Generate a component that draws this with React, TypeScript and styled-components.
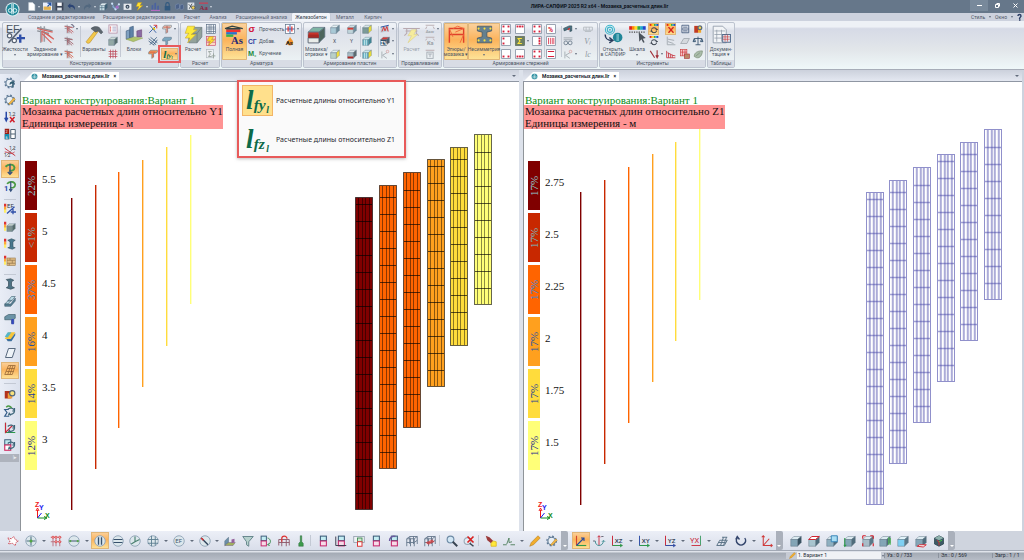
import React from 'react';
import styled, { createGlobalStyle, css } from 'styled-components';

const Global = createGlobalStyle`
  * { box-sizing: border-box; }
  body { margin: 0; background: #cdd3de; font-family: Roboto, "Noto Sans", sans-serif; font-size: 5px; line-height: 5px; color: #4a5363; }
  button, select { font: inherit; color: inherit; border: 0; padding: 0; margin: 0; background: none; }
  h2, p { margin: 0; font-weight: 400; }
  svg { display: block; flex: none; overflow: visible; }
`;

/* ---------- icon drawings, all on a 16 x 16 grid ---------- */

const cube = (front: string, top = '#b9d3dd', side = '#5a7384', extra: React.ReactNode = null) => (
  <>
    <path d="M1 6l4-4h10l-5 4z" fill={top} stroke="#5b7080" strokeWidth=".6" />
    <path d="M10 6l5-4v8l-5 5z" fill={side} stroke="#5b7080" strokeWidth=".6" />
    <path d="M1 6h9v9H1z" fill={front} stroke="#5b7080" strokeWidth=".6" />
    {extra}
  </>
);

const section = (dots: number[][], center: React.ReactNode = null) => (
  <>
    <rect x="1" y="1" width="14" height="14" fill="#fff" stroke="#7d8a9c" strokeWidth="1.2" />
    {dots.map(([x, y], i) => <rect key={i} x={x} y={y} width="3" height="3" fill="#d8203c" />)}
    {center}
  </>
);

const disc = (extra: React.ReactNode) => (
  <>
    <circle cx="8" cy="8" r="7" fill="#dce7ec" stroke="#8fa3b5" strokeWidth="1.2" />
    {extra}
  </>
);

const frame = (color: string, extra: React.ReactNode = null) => (
  <>
    <path d="M1 15V5l4-3h10v10M5 2v10M1 5h10v10M11 5l4-3M1 10h10l4-3M6 15V5M10 2v10" fill="none" stroke={color} strokeWidth="1.2" />
    {extra}
  </>
);

const tee = (color: string, extra: React.ReactNode = null) => (
  <>
    <path d="M1 5l3-3h11v3l-3 2H9v6l-3 2V8H1z" fill={color} stroke="#5c6e80" strokeWidth=".8" />
    {extra}
  </>
);

const rebar = (color: string, extra: React.ReactNode = null) => (
  <>
    <path d="M1 3l12 2M1 7l8 1M5 1v14M8 3v12" fill="none" stroke="#8f8a92" strokeWidth="1.200" />
    <path d="M1 4l13 2M5 5l10 8M5 8l8 7M6 6v8" fill="none" stroke={color} strokeWidth="1.300" />
    {extra}
  </>
);

const axes = (label: string, c1: string, c2: string, ct: string) => (
  <>
    <path d="M2 1v13h13" fill="none" stroke={c1} strokeWidth="1.3" />
    <path d="M2 14h13M12 12l3 2-3 2" fill="none" stroke={c2} strokeWidth="1.3" />
    <text x="5" y="10" fontSize="8" fontWeight="700" fill={ct} fontFamily="Liberation Sans, sans-serif">{label}</text>
  </>
);

const boxes = (extra: React.ReactNode) => (
  <>
    <rect x="4.500" y="1.500" width="8" height="6" fill="#c3edf3" stroke="#3c5c7a" strokeWidth="1.4" />
    <rect x="4.500" y="8" width="8" height="6.500" fill="#f7dbe8" stroke="#c5286e" strokeWidth="1.4" />
    {extra}
  </>
);

const scaleTag = (
  <>
    <rect x="0" y="1" width="3" height="4" fill="#d33" />
    <rect x="0" y="5" width="3" height="4" fill="#fa3" />
    <rect x="0" y="9" width="3" height="4" fill="#fe6" />
  </>
);

const swirl = <path d="M5 6a5 4.500 0 0 1 9 2a5 4.500 0 0 1-7 4M14 4v4h-3M6 14l1-3 2 3" fill="none" stroke="#3c6478" strokeWidth="1.6" />;

const rainbow = (y = 1) => (
  <>
    {['#d22', '#f80', '#fd2', '#3a4', '#2ac', '#24c'].map((c, i) => (
      <rect key={c} x={1 + i * 2.3} y={y} width="2.400" height="3" fill={c} />
    ))}
  </>
);

const word = (t: string, fill: string, size = 13, x = 0) => (
  <text x={x} y="13" fontSize={size} fontWeight="700" fill={fill} fontFamily="Liberation Sans, sans-serif">{t}</text>
);

const gear = (c = '#5c7894') => (
  <>
    <circle cx="7.500" cy="8" r="5" fill="#e8eef4" stroke={c} strokeWidth="1.500" />
    <circle cx="7.500" cy="8" r="6.400" fill="none" stroke={c} strokeWidth="1.600" strokeDasharray="2.500 2.500" />
  </>
);

const bolt = (c = '#ffdf2e', s = '#b8901a') => <path d="M5 1h7L9 6h5L4 15l3-7H2z" fill={c} stroke={s} strokeWidth=".8" />;

const glyphs: Record<string, React.ReactNode> = {
  doc: <path d="M3 1h7l4 4v10H3z" fill="#fff" stroke="#c5ced8" />,
  open: <><rect x="0" y="1" width="16" height="14" fill="#e7eefb" /><path d="M1 8h13v6H1z" fill="#e2b04c" /><path d="M8 2h6v5M14 2L8 8" stroke="#2452a0" strokeWidth="2" fill="none" /></>,
  save: <><path d="M1 1h14v14H1z" fill="#3c4658" /><path d="M4 1h8v6H4z" fill="#fff" /><path d="M4 10h8v5H4z" fill="#dfe5ec" /></>,
  undo: <path d="M1 7l5-5v3c6 0 9 3 8 9-2-4-4-5-8-5v3z" fill="#2b4474" />,
  redo: <path d="M15 7l-5-5v3c-6 0-9 3-8 9 2-4 4-5 8-5v3z" fill="#52687f" />,
  block: cube('#c9dfe8', '#eaf4f7', '#3f6076', <path d="M5 6v9M1 10h9" stroke="#3f6076" />),
  nodes: <><path d="M2 3l5 9 7-8M2 8l6 5 6-3" stroke="#8db7e4" strokeWidth="1.500" fill="none" />{[[2, 3], [14, 4], [8, 13]].map(([x, y]) => <circle key={x} cx={x} cy={y} r="2" fill="#cfe2f5" />)}<circle cx="11" cy="9" r="3" fill="#a56cc0" /></>,
  camera: <><rect x="1" y="3" width="14" height="11" fill="#e6e9ed" /><circle cx="8" cy="8.500" r="3.500" fill="#3a485a" /><circle cx="8" cy="8.500" r="1.500" fill="#b8c5d2" /></>,
  bolt: bolt(),
  chart: <><path d="M1 14V6l3-1v8zM6 14V2l3-1v12zM11 14V7l3-1v8z" fill="#4a62a0" /><path d="M0 15h16" stroke="#b46cc0" strokeWidth="2" /></>,
  lock: <><rect x="3" y="7" width="10" height="8" fill="#31597f" /><path d="M5 7V4a3 3 0 0 1 6 0v3" stroke="#31597f" strokeWidth="2" fill="none" /></>,
  blocks3: <path d="M1 5l5-2 2 2v6l-5 2-2-2zM9 6l4-2 2 2v6l-4 2-2-2z" fill="#4c6288" stroke="#7c90b4" />,
  find: <><rect x="1" y="1" width="12" height="13" fill="#e0e5ea" /><path d="M3 4l7 7M9 3l-5 9" stroke="#36424e" strokeWidth="1.500" /><circle cx="11" cy="10" r="3" fill="#f3d65b" stroke="#333" /></>,
  aa: <><rect x="0" y="1" width="16" height="2" fill="#d33b4f" /><text x="1" y="14" fontSize="12" fontWeight="700" fill="#8f2440" fontFamily="Liberation Serif, serif">Aa</text></>,
  ef: <><text x="0" y="7" fontSize="9" fill="#47535f" fontFamily="Liberation Sans, sans-serif">EF</text><path d="M2 15L13 3" stroke="#566274" strokeWidth="1.400" /><circle cx="3" cy="9" r="1.800" fill="#fff" stroke="#566274" /><circle cx="7" cy="13" r="1.800" fill="#fff" stroke="#566274" /><path d="M11 8h2v2h3v2h-3v3h-2v-3H9v-2h2z" fill="#2f4fa8" /></>,
  rebarBig: <><path d="M1 2l13 3M1 5l10 2" stroke="#8a8f96" strokeWidth="1.100" /><path d="M4 1v14M7 1v13" stroke="#9a9fa6" strokeWidth="1.300" /><path d="M1 3l13 3M5 5l10 7M5 7l8 8M9 7l6 5M5 5v9" stroke="#d8605a" strokeWidth=".9" fill="none" /></>,
  rebar1: rebar('#c0565a', <path d="M11 1h3v2h2v2h-2" stroke="#335" fill="none" />),
  rebar2: rebar('#9d5961'),
  rebar3: rebar('#d05a45'),
  hammer: <><path d="M1 14L9 4l2 1.500L4 15c-1 1-3 0-3-1z" fill="#f3c84a" stroke="#b98a24" strokeWidth=".5" /><path d="M5 3c2-2 5-2 7-1l3 4-1.500 1.500L11 5 9 6z" fill="#5d666e" stroke="#3e4852" strokeWidth=".4" /></>,
  list: <><rect x="1.500" y="1.500" width="13" height="13" fill="#fff" stroke="#ad86a0" strokeWidth="1.200" /><path d="M3 5h2M3 8h2M3 11h2" stroke="#c33" strokeWidth="1.500" /><path d="M7 5h6M7 8h6M7 11h6" stroke="#77a" /></>,
  greyCube: cube('#93a8a4', '#cddbd6', '#586c6c'),
  gridRed: <path d="M1 4h14M1 8h14M1 12h14M4 1v14M8 1v14M12 1v14" stroke="#bd4d5d" strokeWidth="1.200" />,
  blocksBig: <><path d="M1 12V5l3-1v7z" fill="#7fa0c0" stroke="#39577a" strokeWidth=".5" /><path d="M4 11V2l3-1v9z" fill="#5f83a8" stroke="#39577a" strokeWidth=".5" /><path d="M10 10V5l4-1v6z" fill="#8a6aa4" stroke="#6d4472" strokeWidth=".5" /><path d="M1 12l7-2 7 1-8 3z" fill="#b0c56c" stroke="#8a9c58" strokeWidth=".4" /></>,
  node1: <><path d="M2 14L14 2M3 2l10 12" stroke="#3a62a8" strokeWidth="1.500" /><path d="M9 2h5v5" stroke="#d33" strokeWidth="1.500" fill="none" /><path d="M8 6l3 3" stroke="#ec0" strokeWidth="2.500" /></>,
  node2: <path d="M1 4l12 10M4 2l11 9M1 8l9 7M3 14L14 2M9 14l6-8" stroke="#35567a" strokeWidth="1.300" />,
  teeOrange: tee('#f1a35b', <path d="M2 5h10M8 7v6" stroke="#c33" />),
  teeRed: tee('#e7d4c4', <path d="M2 5h11M8 3v11" stroke="#c0554b" strokeWidth="1.300" />),
  teeBlue: tee('#7da7bf'),
  rc: <><path d="M4 7l4-5h7v8l-4 5H4z" fill="#93a29b" stroke="#66777a" strokeWidth=".6" /><path d="M4 7h7l4-5M11 7v8" stroke="#66777a" strokeWidth=".5" fill="none" /><path d="M9 1H3L1 7h3l-3 4h4L3 15l7-7H6l5-4H8z" fill="#fdea3a" stroke="#c9a92a" strokeWidth=".5" /></>,
  table: <><rect x="1" y="1" width="14" height="14" fill="#f0f3f8" stroke="#54667e" /><path d="M1 5h14M1 8h14M1 12h14M5 1v14M8 1v14M12 1v14" stroke="#54667e" /></>,
  tableBolt: <><rect x="1" y="1" width="14" height="14" fill="#fbd9c4" stroke="#c46" /><path d="M1 5h14M1 10h14M5 1v14" stroke="#c46" />{bolt()}</>,
  sumGrey: <><rect x="1" y="1" width="11" height="13" fill="#eceff2" stroke="#adb5bd" /><path d="M9 4H4l3 4-3 4h5M12 7v8M9 11h6" stroke="#9ba6a0" strokeWidth="1.500" fill="none" /></>,
  as: <><path d="M0 3l6-2 9 2" stroke="#344" fill="none" /><rect x="1" y="2.500" width="12" height="1.500" fill="#344" /><rect x="1" y="4" width="12" height="2" fill="#e33" /><rect x="1" y="6" width="9" height="2" fill="#2b6fd0" /><rect x="1" y="8" width="6" height="2" fill="#39b24c" /><text x="5" y="16" fontSize="9" fontWeight="700" fill="#252b78" fontFamily="Liberation Serif, serif">As</text></>,
  sigma: word('σ', '#d3143a', 17, 1),
  cg: word('СГ', '#2b3da0', 12),
  mx: <>{word('M', '#1d8a3e', 13)}<text x="11" y="15" fontSize="7" fill="#1d8a3e">x</text></>,
  spread: <><rect x="1" y="1" width="14" height="14" fill="#fff" stroke="#54667e" /><path d="M8 1v14M1 8h14" stroke="#2c4f9c" strokeWidth="1.400" /><path d="M5 4v8M11 4v8" stroke="#d33" strokeWidth="2" /></>,
  fire: <><path d="M8 1c1 4 6 5 5 11-1 4-9 4-10 0C2 8 7 6 8 1z" fill="#f5942b" /><text x="1" y="14" fontSize="10" fontWeight="700" fill="#2b2320">As</text></>,
  mosaic: cube('#c9352c', '#7eb4a4', '#4d655c', <><path d="M1 8h9v3H1z" fill="#a82a24" /><path d="M1 11h9v4H1z" fill="#e9ece9" stroke="#44586a" strokeWidth=".5" /></>),
  cubePlain: cube('#a9c9d6', '#e3eff2', '#6c8c9b'),
  cubeYellow: cube('#b9d0c8', '#e3eff2', '#f2df3c'),
  cubeRedTop: cube('#c0d4da', '#cfe0e4', '#6c8c9b', <path d="M1 6h9v3H1z" fill="#d23b34" />),
  cubeRedBot: cube('#a9bfc6', '#dde8eb', '#5e6c70', <path d="M1 12h9v3H1z" fill="#b02a24" />),
  cubeMix: cube('#7c9a98', '#d9e7e6', '#eadd37'),
  cubeTeal: cube('#69b3c2', '#c9e9ed', '#3d8795', <path d="M4 6v9M7 6v9" stroke="#e9fbfd" />),
  cubeTealY: cube('#69b3c2', '#c9e9ed', '#eadd37', <path d="M4 6v9M7 6v9" stroke="#e9fbfd" />),
  plot1: <><path d="M1 5l10-2 3-2v10L1 14z" fill="#b9cbd6" /><path d="M3 12l3-7 2 6 3-7 2 8" stroke="#d33" fill="none" strokeWidth="1.500" /><path d="M1 5l13-3" stroke="#2c4f9c" strokeWidth="1.500" /></>,
  plot2: <>{cube('#2f4f66', '#d43c38', '#4a5f6d')}<text x="1" y="14" fontSize="8" fontWeight="700" fill="#fff">Σ%</text></>,
  kGrey: <><path d="M3 4v11M11 6L4 10l7 5" stroke="#a9b0b6" strokeWidth="1.500" fill="none" /><circle cx="12" cy="4" r="2" fill="none" stroke="#d59c9c" strokeWidth="1.200" /></>,
  punch: <><path d="M1 3h14M3 5h10M4 3v4l-2 2M12 3v4l2 2" stroke="#b8a9b0" strokeWidth=".9" fill="none" /><path d="M8 4h4l-2 4h3L5 15l3-6H5z" fill="#f6ec9c" stroke="#dccf8a" strokeWidth=".5" /></>,
  asw: <><path d="M1 2h14M3 4l-2 4M13 4l2 4" stroke="#b7a9ad" strokeWidth="1.400" /><text x="1" y="14" fontSize="7" fill="#9ca2a8" fontWeight="700">Asw</text></>,
  ka: <><path d="M1 2h14M3 4l-2 3M13 4l2 3" stroke="#b7a9ad" strokeWidth="1.400" /><text x="3" y="14" fontSize="9" fill="#9ca2a8" fontWeight="700">Ka</text></>,
  tGrey: <><path d="M1 2h14" stroke="#b7a9ad" strokeWidth="1.500" /><rect x="3" y="5" width="10" height="10" fill="none" stroke="#a4acb3" strokeWidth="1.400" /><path d="M5 8h6M8 8v5" stroke="#a4acb3" strokeWidth="1.400" /></>,
  epure: <><path d="M2 15V3h12v12M2 8h12" stroke="#e0402a" strokeWidth="1.200" fill="none" /><path d="M2 3l3 7M14 3L7 6M14 8l-3 7M5 3l4-2 5 2" stroke="#f0683a" strokeWidth=".8" fill="none" /></>,
  ibeam: <><path d="M2 1h12v4l-4 1v4l4 1v4H2v-4l4-1V6L2 5z" fill="#65808f" stroke="#3f5260" strokeWidth=".6" />{[[3, 3], [8, 3], [13, 3], [3, 13], [8, 13], [13, 13]].map(([x, y], i) => <circle key={i} cx={x} cy={y} r=".9" fill="#ffe23a" />)}</>,
  s1: section([[2.5, 2.5], [10.5, 2.5], [2.5, 10.5], [10.5, 10.5]]),
  s2: section([[2.5, 2.5], [2.5, 10.5]]),
  s3: section([[2.5, 10.5], [10.5, 10.5]]),
  s4: section([[2.5, 2.5], [6.5, 2.5], [10.5, 2.5]]),
  s5: <><rect x="1" y="1" width="14" height="14" fill="#6d7f62" stroke="#495642" /><path d="M11 4H5l3 4-3 4h6" stroke="#ffe63a" strokeWidth="1.800" fill="none" /></>,
  s6: section([[2.5, 10.5], [6.5, 10.5], [10.5, 10.5]]),
  s7: section([[10.5, 2.5], [10.5, 6.5], [10.5, 10.5]]),
  pct: section([], <text x="3" y="12" fontSize="11" fontWeight="700" fill="#d8203c">%</text>),
  bars: section([], <path d="M4 3v10M7 3v10M10 3v10M12.500 3v10" stroke="#d8203c" strokeWidth="1.200" />),
  hbars: section([], <path d="M3 4h10M3 12h10" stroke="#d8203c" strokeWidth="1.600" />),
  beam: <><path d="M1 7l9-4h4v8l-3 1V7l-9 4z" fill="#4b7282" stroke="#2b4652" /><path d="M8 9l3-2" stroke="#d33" strokeWidth="2" /></>,
  glasses: <><path d="M1 3h14M1 6h14" stroke="#9aa3ac" strokeWidth="1.400" /><circle cx="4.500" cy="11" r="3" fill="none" stroke="#6b7b8b" strokeWidth="1.400" /><circle cx="11.500" cy="11" r="3" fill="none" stroke="#6b7b8b" strokeWidth="1.400" /></>,
  g1: <path d="M1 5h14v5H1zM5 5v5M10 5v5M3 12h10" stroke="#b1b7be" fill="none" strokeWidth="1.300" />,
  v1: <text x="2" y="13" fontSize="13" fontStyle="italic" fill="#8e979f" fontFamily="Liberation Serif, serif">Vₗ</text>,
  lc: <text x="3" y="13" fontSize="13" fontStyle="italic" fill="#8e979f" fontFamily="Liberation Serif, serif">lc</text>,
  sapfir: <><circle cx="5" cy="4" r="3.800" fill="none" stroke="#3cb6cc" strokeWidth=".9" /><circle cx="5" cy="4" r="2.200" fill="none" stroke="#3cb6cc" strokeWidth=".9" /><circle cx="5" cy="4" r=".8" fill="#3cb6cc" /><circle cx="11.500" cy="10.500" r="4" fill="#1f8598" /><path d="M11 7.500v6M12 7.500v6" stroke="#bfeaf2" strokeWidth=".5" /><path d="M1 8c0 4 2 5 6 5M4.500 10.500L7.500 13l-3 2" stroke="#273a5c" fill="none" strokeWidth="1.200" /></>,
  ruler: <>{rainbow(1)}<path d="M1 6h14" stroke="#444" strokeDasharray="1 1" strokeWidth="1.200" /><path d="M9 6l6 5-2.500.5L14 14.500l-1.200.5-1.500-3L9.500 14z" fill="#4b535c" /></>,
  scaleCycle: <>{rainbow(0)}<path d="M4 9a4 3 0 0 1 8 0M12 11a4 3 0 0 1-8 0M11 7l1 3 2-2M5 13l-1-3-2 2" stroke="#39424e" strokeWidth="1.600" fill="none" /></>,
  scaleX: <>{rainbow(0)}<path d="M4 5l8 9M12 5l-8 9" stroke="#d2221c" strokeWidth="2.200" /></>,
  vArrow: <path d="M2 3l7 11M13 2v10M11 10l2 4 2-4" stroke="#a3333c" strokeWidth="1.800" fill="none" />,
  filterE: <path d="M3 2h11M5 5h7M3 8h11M5 11h7M3 14h11M3 2v12M14 2v12" stroke="#3d5478" strokeWidth="1.300" fill="none" />,
  hist: <path d="M1 3v11h14M2 6l5 2 3 2 5 1M4 6v8M7 8v6M10 9v5" stroke="#c73c46" strokeWidth="1.400" fill="none" />,
  graph2: <path d="M2 1v13h13M3 5l10 2M3 9l9 3" stroke="#a9b0b6" strokeWidth="1.600" fill="none" />,
  palette: <><path d="M2 3h6v11H2z" fill="#c23b22" /><path d="M8 5h5v9H8z" fill="#f0a62c" /><circle cx="11" cy="6" r="4" fill="#5a6a7a" /><circle cx="11" cy="6" r="2" fill="#f7d64f" /></>,
  scales: <path d="M8 1v13M4 14h8M2 4h12M2 4L0 9h4zM14 4l-2 5h4z" stroke="#35506c" strokeWidth="1.400" fill="#9fb7cc" />,
  eraser: <path d="M1 12L6 4h9l-4 8z" fill="#d5d9de" stroke="#8d959d" />,
  redGrid: <><rect x="1" y="1" width="10" height="10" fill="#f6c4c8" stroke="#c33" /><path d="M4 1v10M8 1v10M1 5h10" stroke="#c33" /><rect x="7" y="8" width="8" height="7" fill="#b86" stroke="#a33" /></>,
  leaf: <path d="M2 12C2 5 8 3 15 3c0 7-4 12-9 11zM5 11l6-5" fill="#a9bca9" stroke="#74886f" />,
  docs: <><path d="M1 1h8l3 3v11H1z" fill="#f2f4f7" stroke="#8c97a5" strokeWidth=".7" /><path d="M2 5h9M2 8h9M2 11h9M4 4v10M8 4v10" stroke="#8c97a5" strokeWidth=".6" /><rect x="9" y="8" width="6.500" height="6.500" fill="#dfe6ef" stroke="#3d5a80" strokeWidth=".7" /><path d="M9 10h6M9 12h6M11 8v6M13 8v6" stroke="#c33" strokeWidth=".5" /></>,
  gear: <>{gear()}<path d="M8 8h4v6M14 7a4 4 0 0 0-6 3" stroke="#2e5a6e" strokeWidth="1.800" fill="none" /></>,
  gearPen: <>{gear()}<path d="M6 13l7-8 2 2-7 7z" fill="#f6b945" stroke="#a8741d" strokeWidth=".6" /></>,
  numX: <><path d="M3 1v11M1 9l2 4 2-4" stroke="#2747a5" strokeWidth="2" fill="none" /><text x="6" y="7" fontSize="7" fill="#333">1,2</text><path d="M8 8l6 7M14 8l-6 7" stroke="#d1202c" strokeWidth="2" /></>,
  cells: <><rect x="1" y="1" width="6" height="14" fill="#9b1c12" /><rect x="1" y="8" width="6" height="7" fill="#158db0" /><text x="2" y="6" fontSize="5" fill="#fff">2</text><text x="2" y="14" fontSize="5" fill="#fff">6</text><path d="M9 2h6v12H9zM9 8h6" fill="#fff" stroke="#4c5e70" strokeWidth="1.300" /></>,
  curves: <><path d="M1 3l14 10M1 8c5 0 9 4 13 0" stroke="#c22e38" strokeWidth="1.200" fill="none" /><path d="M3 13L14 2" stroke="#888" /><text x="7" y="5" fontSize="6" fill="#333">1.2</text><text x="0" y="15" fontSize="6" fill="#333">1.2</text></>,
  turn: <><path d="M2 5c4-4 11-4 12 1 0 4-4 5-7 4" stroke="#4a9a44" strokeWidth="2.500" fill="none" /><path d="M8 1v14M5 12l3 3 3-3" stroke="#334f7c" strokeWidth="1.800" fill="none" /></>,
  turn1: <><path d="M4 5c4-4 10-3 11 1 0 4-4 5-7 4" stroke="#4a9a44" strokeWidth="2.200" fill="none" /><path d="M9 2v13M7 12l2 3 2-3" stroke="#334f7c" strokeWidth="1.600" fill="none" /><text x="0" y="15" fontSize="10" fontWeight="700" fill="#2747a5">1</text></>,
  efTag: <>{scaleTag}<text x="4" y="7" fontSize="8" fill="#334">EF</text><path d="M4 14L14 5M12 8v7M9 12h7" stroke="#2f4fa8" strokeWidth="1.700" /></>,
  cubeTag: <>{scaleTag}<g transform="translate(3 2) scale(.8)">{cube('#7d918f', '#c4d1cd', '#566c6a')}</g></>,
  beamTag: <>{scaleTag}<path d="M5 3l5-2 5 2-3 2v7l3 1-4 2-6-2 3-1V5z" fill="#49788e" stroke="#2b4652" strokeWidth=".7" /></>,
  brickTag: <>{scaleTag}<rect x="4" y="4" width="11" height="10" fill="#e0bd86" stroke="#96784c" strokeWidth=".8" /><path d="M4 7h11M4 11h11M8 4v3M11 7v4M7 11v3" stroke="#96784c" /></>,
  beam3: <path d="M3 2l6-1 4 2-3 2v6l4 2-5 2-6-2 3-2V5z" fill="#4d7284" stroke="#263d49" strokeWidth=".8" />,
  stairs: <><path d="M1 12l5-5h4l-5 5zM5 8l5-6h5l-5 6z" fill="#bcdce7" stroke="#3c5a6c" strokeWidth=".8" /><path d="M1 12h8l6-8v4l-6 7H1z" fill="#557f92" stroke="#3c5a6c" strokeWidth=".8" /></>,
  slab: <><path d="M1 5l5-3h9v5l-2 1v6h-3V9H1z" fill="#6b93a6" stroke="#33505f" strokeWidth=".8" /><path d="M10 8h3v7h-3z" fill="#3546c0" /></>,
  slabY: <><path d="M1 12l5-9h9l-5 9z" fill="#f6c53a" /><path d="M1 9l4-6h5L5 10z" fill="#56b5c8" /><path d="M5 15h5l5-8V4L9 12H3z" fill="#3c6f9d" /></>,
  para: <path d="M2 14L6 2h9l-4 12z" fill="#eef3f8" stroke="#53657a" strokeWidth="1.300" />,
  paraGrid: <path d="M1 14L6 2h9l-4 12zM3 10h10M4 6h10M5 14l4-12M8 14l4-12" fill="none" stroke="#9b6b38" strokeWidth="1.100" />,
  shapes: <><rect x="1" y="4" width="8" height="10" fill="#b1321d" /><rect x="5" y="7" width="6" height="7" fill="#f2a13a" /><circle cx="11" cy="7" r="3.500" fill="#f9e27c" stroke="#536779" strokeWidth="1.500" /></>,
  sumTurn: <><path d="M6 6H1l3 4-3 5h6" stroke="#335c88" strokeWidth="1.600" fill="none" />{swirl}<path d="M3 3c3-3 6-1 7 1" stroke="#4a9a44" strokeWidth="2" fill="none" /></>,
  axTurn: <><path d="M2 1v13h13" stroke="#2d9a4b" strokeWidth="1.500" fill="none" /><path d="M2 1v13l9-9" stroke="#c9283a" strokeWidth="1.500" fill="none" />{swirl}</>,
  boxTurn: <><rect x="1" y="1" width="8" height="7" fill="#bfe9ef" stroke="#3c5c7a" strokeWidth="1.300" /><rect x="1" y="8" width="8" height="7" fill="#fff" stroke="#d12a60" strokeWidth="1.500" />{swirl}</>,
  star: <path d="M1 4l5 1 3-3 2 4 4 2-3 2-1 4-4-3-5 1 2-4z" fill="#fff" stroke="#c9404c" strokeWidth="1.200" strokeDasharray="2 1" />,
  dPlus: disc(<><path d="M8 2v12M2 8h12" stroke="#4c7080" strokeWidth="1.400" /><circle cx="8" cy="8" r="2" fill="#52a545" /></>),
  gridSel: <><path d="M1 3h14M1 9h14M4 3v12M8 3v12M13 3v12" stroke="#b86a78" strokeWidth="1.200" fill="none" />{[[4, 3], [8, 3], [13, 3], [8, 9], [13, 9]].map(([x, y], i) => <circle key={i} cx={x} cy={y} r="1.400" fill="#f6d0d4" stroke="#d33" />)}</>,
  dH: disc(<><path d="M2 8h12" stroke="#4c6078" strokeWidth="1.400" /><circle cx="3" cy="8" r="1.500" fill="#52a545" /><circle cx="13" cy="8" r="1.500" fill="#52a545" /></>),
  dV: disc(<path d="M6 3v10M10 3v10" stroke="#36506c" strokeWidth="1.800" />),
  dEq: disc(<path d="M2 6h12M2 10h12" stroke="#36506c" strokeWidth="1.600" />),
  dAx: disc(<path d="M8 2v7M8 9l6-3M8 9l-5 3" stroke="#4a8070" strokeWidth="1.500" />),
  dGrid: disc(<path d="M6 1v14M11 2v12M1 6h14M1 11h14" stroke="#5a7d90" strokeWidth="1.200" />),
  dEf: disc(<text x="3" y="11" fontSize="8" fill="#44566a">EF</text>),
  dDiag: disc(<><path d="M3 4l9 9" stroke="#31445c" strokeWidth="1.800" /><path d="M3 4l3 3" stroke="#d33" strokeWidth="2" /></>),
  steps: <><path d="M1 14V8l5-5v7z" fill="#6b8fa8" stroke="#4c6478" strokeWidth=".6" /><path d="M1 14l5-4h9l-3 4z" fill="#9fb05c" stroke="#6d5a78" strokeWidth=".6" /><path d="M10 11V6l4-1v5z" fill="#94609c" /></>,
  funnel: <path d="M1 2h14L9 9v6l-3-2V9z" fill="#b6d1cd" stroke="#5d7f86" strokeWidth="1.200" />,
  boxArc: <><rect x="1.500" y="1.500" width="7" height="6" fill="#c3edf3" stroke="#3c5c7a" strokeWidth="1.300" /><rect x="1.500" y="8" width="7" height="6.500" fill="#f7dbe8" stroke="#c5286e" strokeWidth="1.300" /><path d="M10 4c5 1 5 7 1 9M12 11l-2 2 3 1" stroke="#3a8a50" fill="none" strokeWidth="1.200" /></>,
  magnet: <><path d="M1 14V6h14v8M5 6v9M11 6v9M1 10h14" stroke="#8c5666" strokeWidth="1.200" fill="none" /><path d="M5 9V5a3.500 3.500 0 0 1 7 0" stroke="#d33" strokeWidth="1.600" fill="none" /></>,
  brush: <path d="M7 1h2v8l2 2v4H5v-4l2-2z" fill="#3d9a4b" stroke="#28673a" strokeWidth=".6" />,
  box1: boxes(null),
  boxAx: boxes(<path d="M1 2v12h14" stroke="#334" fill="none" strokeWidth="1.200" />),
  boxWin: <><rect x="1" y="2" width="14" height="8" fill="#eef1f4" stroke="#8a98a6" /><rect x="6" y="4" width="6" height="5" fill="#cfe7cf" stroke="#3a8a50" strokeWidth="1.200" /><rect x="6" y="9" width="6" height="6" fill="#fff" stroke="#d33" strokeWidth="1.300" /></>,
  boxTurn2: boxes(<path d="M2 8a6 6 0 0 1 8-6" stroke="#6a5ba0" fill="none" strokeWidth="1.800" />),
  frame1: frame('#65778c'),
  frame2: frame('#65778c', <path d="M2 10l9-4 3 3-8 4z" fill="#d33" opacity=".7" />),
  loupe: <><circle cx="6" cy="6" r="4.500" fill="#d2e7f5" stroke="#6d8aa5" strokeWidth="1.500" /><path d="M9 9l6 6" stroke="#384452" strokeWidth="2.500" /></>,
  loupeX: <><circle cx="6" cy="8" r="4.500" fill="#e6eef5" stroke="#9caab8" strokeWidth="1.500" /><path d="M9 11l5 4" stroke="#384452" strokeWidth="2" /><path d="M6 2l8 8M14 2L6 10" stroke="#d91f1f" strokeWidth="2.200" /></>,
  torch: <><path d="M1 1l5 2 5 5-3 3-5-4z" fill="#9c3a3a" /><path d="M8 11l3-3 4 1v6H8z" fill="#ffe83a" stroke="#d8b31c" /></>,
  dim: <path d="M0 13h5M10 13h6M5 12L8 4v6l4-1" stroke="#4d7d5a" strokeWidth="1.200" fill="none" />,
  pencil: <path d="M1 15l2-5 9-9 3 3-9 9z" fill="#f2ad2c" stroke="#a8741d" strokeWidth=".7" />,
  isoAx: <><path d="M2 1v13" stroke="#d1462f" strokeWidth="1.500" fill="none" /><path d="M2 14h13" stroke="#2d9a4b" strokeWidth="1.500" /><path d="M2 14L12 4M8 4h4v4" stroke="#274a9c" strokeWidth="1.500" fill="none" /></>,
  rotAx: <><path d="M8 1v13M6 3l2-2 2 2" stroke="#c9283a" strokeWidth="1.200" fill="none" /><path d="M3 8c0 8 10 8 11 0M12 9l2-2 2 2" stroke="#3a8a90" strokeWidth="1.200" fill="none" /><path d="M0 8h3M11 2h3" stroke="#445" /></>,
  xz: axes('XZ', '#c9283a', '#2d9a4b', '#38465a'),
  xy: axes('XY', '#2f4fa8', '#2d9a4b', '#38465a'),
  yz: axes('YZ', '#c9283a', '#2f4fa8', '#38465a'),
  yx: <><text x="0" y="10" fontSize="10" fill="#c9283a">YX</text><path d="M14 1v13" stroke="#3a9a60" strokeWidth="1.200" /><path d="M14 14H2" stroke="#c9283a" strokeWidth="1.200" /></>,
  planes: <path d="M1 14l4-7h10l-4 7zM3 10h10M6 14l4-11M10 14l4-11M8 3h7" stroke="#5d7488" fill="none" strokeWidth="1.300" />,
  rotate: <path d="M3 4a6 6 0 1 0 10 0M1 6l2-4 3 4" stroke="#33456c" strokeWidth="1.800" fill="none" />,
  axRed: <path d="M3 1v13h12M3 14l8-9M1 3l2-2 2 2M13 12l2 2-2 2" stroke="#cf3a3a" strokeWidth="1.400" fill="none" />,
  cubeA: cube('#83a5b6', '#dcebf1', '#36505f'),
  cubeB: cube('#a8c4cf', '#fff', '#4f6c7c', <path d="M1 6l4-4h10l-5 4z" fill="#fff" stroke="#d1202c" strokeWidth="1.300" />),
  cubeC: cube('#8eb0c0', '#dcebf1', '#4f6c7c', <path d="M7 1h8v8H7z" fill="#a9ddf3" stroke="#2f7fb6" strokeWidth="1.200" />),
  cubeD: cube('#83a5b6', '#dcebf1', '#4f6c7c', <path d="M1 4v11M0 13l1 2 2-2" stroke="#2d9a4b" strokeWidth="1.400" fill="none" />),
  cubeE: cube('#a8bcc8', '#dcebf1', '#5a7888', <path d="M1 1h4M1 1v4M15 1h-4M15 1v4M1 15v-4M15 15v-4" stroke="#d1202c" strokeWidth="1.500" fill="none" />),
  cubeF: cube('#83a5b6', '#dcebf1', '#4f6c7c', <path d="M13 3v10M15 4v9" stroke="#4db453" strokeWidth="1.400" />),
  cubeG: cube('#7fd0f3', '#e2f3fa', '#5a7888'),
  cubeH: cube('#83a5b6', '#dcebf1', '#4f6c7c', <path d="M3 15l3-2h9l-4 3z" fill="#fff" stroke="#d1202c" strokeWidth="1.200" />),
  cubeI: <><path d="M8 1l6 3v8l-6 3-6-3V4z" fill="#3c5a66" stroke="#2b434d" /><path d="M8 1l6 3-6 3-6-3z" fill="#8fb2ad" /><path d="M5 7l3 2v5" stroke="#d33" strokeWidth="1.200" fill="none" /><path d="M8 9l4-2" stroke="#4c4" strokeWidth="1.200" /></>,
};

const Icon = ({ name, size = 10 }: { name: string; size?: number }) => (
  <svg viewBox="0 0 16 16" width={size} height={size} aria-hidden="true">{glyphs[name]}</svg>
);

const LengthIcon = ({ axis, size }: { axis: string; size: number }) => (
  <svg viewBox="0 0 30 30" width={size} height={size} aria-hidden="true" fill="#0d6a49" fontFamily="Liberation Serif, serif" fontStyle="italic" fontWeight="700">
    <text x="3" y="24" fontSize="28">l</text>
    <text x="11" y="25" fontSize="16">f{axis}</text>
    <text x="24" y="28" fontSize="10">l</text>
  </svg>
);

const LogoMark = ({ size }: { size: number }) => (
  <svg viewBox="0 0 16 16" width={size} height={size} aria-hidden="true">
    <circle cx="8" cy="8" r="7.500" fill="#dcebf0" />
    <circle cx="8" cy="8" r="6.400" fill="#20889a" />
    <path d="M7.300 2v11M8.800 2v11" stroke="#e8f8fa" strokeWidth="1" />
    <circle cx="5.600" cy="9" r="2" fill="none" stroke="#e8f8fa" />
    <circle cx="10.500" cy="9" r="2" fill="none" stroke="#e8f8fa" />
  </svg>
);

/* ---------- shared parts ---------- */

const hot = css`background: linear-gradient(#fbd3a0, #fbb35c 45%, #fee59a); box-shadow: inset 0 0 0 1px #e0b678;`;

const Caret = styled.span<{ $color?: string; $wide?: boolean }>`
  flex: none;
  width: 0;
  height: 0;
  border: ${p => (p.$wide ? 2 : 1)}px solid transparent;
  border-top: 2px solid ${p => p.$color ?? '#626c7c'};
  border-bottom: 0;
`;

const Page = styled.div`
  display: flex;
  flex-direction: column;
  min-height: 100vh;
`;

/* ---------- title bar and menu ---------- */

const TitleBar = styled.header`
  display: flex;
  align-items: center;
  height: 13px;
  padding-left: 27px;
  background: #66778a;
`;
const AppButton = styled.button`
  position: absolute;
  left: 5px;
  top: 2px;
`;
const QuickTools = styled.div`
  display: flex;
  flex: none;
  align-items: center;
`;
const QuickButton = styled.button<{ $menu?: boolean }>`
  display: flex;
  align-items: center;
  gap: 2px;
  width: ${p => (p.$menu ? 16 : 12)}px;
`;
const AppTitle = styled.div`
  flex: 1;
  padding-left: 14px;
  text-align: center;
  white-space: nowrap;
  color: #0d131b;
  font-weight: 700;
`;
const WindowControls = styled.div`
  display: flex;
  flex: none;
  align-self: stretch;
`;
const WindowButton = styled.button<{ $lit?: boolean }>`
  display: grid;
  place-items: center;
  width: 18px;
  height: 11px;
  background: ${p => (p.$lit ? '#78899b' : 'none')};
`;
const MenuBar = styled.nav`
  display: flex;
  height: 8px;
  padding-left: 24px;
  background: #cdd2de;
`;
const MenuTab = styled.button<{ $active?: boolean; $w: number }>`
  width: ${p => p.$w}px;
  height: 8px;
  white-space: nowrap;
  border-radius: 1px 1px 0 0;
  color: #586173;
  ${p => p.$active && css`background: #f1f4f9; box-shadow: 0 0 1px #8d96a6; color: #343d4c;`}
`;
const MenuRight = styled.div`
  display: flex;
  gap: 4px;
  margin-left: auto;
  padding-right: 2px;
`;
const MenuLink = styled.button`
  display: flex;
  align-items: center;
  gap: 4px;
`;

/* ---------- ribbon ---------- */

const Ribbon = styled.section`
  display: flex;
  gap: 1px;
  height: 49px;
  padding: 1px 2px;
  background: linear-gradient(#eef1f6 0 12%, #d6dae6 16%, #e2e6ea 60%, #eff8f9);
  border-bottom: 1px solid #a7adb8;
`;
const Group = styled.div`
  display: flex;
  flex: none;
  flex-direction: column;
  border: 1px solid #bcc3cf;
  border-radius: 2px;
  background: linear-gradient(#eef1f6 0 8%, #dde1ea 18%, #e6eaee 60%, #eff7f8);
`;
const GroupBody = styled.div`
  display: flex;
  height: 38px;
`;
const GroupName = styled.div`
  height: 7px;
  line-height: 7px;
  text-align: center;
  white-space: nowrap;
  background: #d8dce5;
`;
const Big = styled.button<{ $w: number; $on?: boolean; $off?: boolean }>`
  display: flex;
  flex-direction: column;
  align-items: center;
  width: ${p => p.$w}px;
  padding-top: 2px;
  white-space: nowrap;
  border-radius: 1px;
  ${p => p.$on && hot}
  ${p => p.$off && css`color: #9aa2ad;`}
  svg { margin-bottom: 3px; }
  ${Caret} { margin-top: 2px; }
`;
const Column = styled.div<{ $w: number }>`
  display: grid;
  grid-template-rows: repeat(3, 1fr);
  width: ${p => p.$w}px;
`;
const Small = styled.button<{ $on?: boolean }>`
  display: flex;
  align-items: center;
  justify-self: start;
  gap: 2px;
  min-width: 11px;
  padding-left: 1px;
  white-space: nowrap;
  ${p => p.$on && hot}
`;
const AxisTag = styled.span`
  align-self: center;
  padding-left: 4px;
`;
const Rule = styled.span`
  width: 1px;
  margin: 3px 0;
  background: #c3c9d4;
`;
const Marked = styled(Small)`
  ${hot}
  gap: 1px;
  outline: 2px solid #e85a5e;
  outline-offset: 1px;
  z-index: 1;
  width: 17px;
`;

type Cell = string | { icon: string; menu?: boolean; on?: boolean; text?: string };
const SmallColumn = ({ w, cells }: { w: number; cells: Cell[] }) => (
  <Column $w={w}>
    {cells.map((c, i) => {
      const cell = typeof c === 'string' ? { icon: c } : c;
      if (cell.icon === 'lfy') {
        return <Marked key={i} aria-label="Расчетные длины"><LengthIcon axis="y" size={12} /><Caret /></Marked>;
      }
      if (cell.icon.length === 1) return <AxisTag key={i}>{cell.icon}</AxisTag>;
      return (
        <Small key={i} $on={cell.on} aria-label={cell.text ?? cell.icon}>
          <Icon name={cell.icon} size={cell.text ? 9 : 10} />{cell.text}{cell.menu && <Caret />}
        </Small>
      );
    })}
  </Column>
);

interface BigProps { w: number; icon: string; lines: string[]; menu?: boolean; on?: boolean; off?: boolean }
const BigButton = ({ w, icon, lines, menu, on, off }: BigProps) => (
  <Big $w={w} $on={on} $off={off}>
    <Icon name={icon} size={19} />
    {lines.map((l, i) => <span key={l}>{l}{menu && lines.length > 1 && i === 1 ? ' ▾' : ''}</span>)}
    {menu && lines.length === 1 && <Caret />}
  </Big>
);

const RibbonGroup = ({ name, children }: { name: string; children: React.ReactNode }) => (
  <Group><GroupBody>{children}</GroupBody><GroupName>{name}</GroupName></Group>
);

const m = (icon: string): Cell => ({ icon, menu: true });

const RibbonBar = () => (
  <Ribbon>
    <RibbonGroup name="Конструирование">
      <BigButton w={24} icon="ef" lines={['Жесткости']} menu />
      <BigButton w={36} icon="rebarBig" lines={['Заданное', 'армирование']} menu />
      <SmallColumn w={17} cells={[m('rebar1'), 'rebar2', 'rebar3']} />
      <Rule />
      <BigButton w={26} icon="hammer" lines={['Варианты']} />
      <SmallColumn w={13} cells={['list', 'greyCube', 'gridRed']} />
      <Rule />
      <BigButton w={26} icon="blocksBig" lines={['Блоки']} />
      <SmallColumn w={14} cells={['node1', 'node2', 'teeOrange']} />
      <SmallColumn w={17} cells={[m('teeRed'), 'teeBlue', 'lfy']} />
    </RibbonGroup>
    <RibbonGroup name="Расчет">
      <BigButton w={24} icon="rc" lines={['Расчет']} />
      <SmallColumn w={14} cells={['table', 'tableBolt', 'sumGrey']} />
    </RibbonGroup>
    <RibbonGroup name="Арматура">
      <BigButton w={25} icon="as" lines={['Полная']} on />
      <SmallColumn w={37} cells={[{ icon: 'sigma', text: 'Прочность' }, { icon: 'cg', text: 'Добав.' }, { icon: 'mx', text: 'Кручение' }]} />
      <SmallColumn w={17} cells={[m('spread'), 'fire']} />
    </RibbonGroup>
    <RibbonGroup name="Армирование пластин">
      <BigButton w={25} icon="mosaic" lines={['Мозаика/', 'отрезки']} menu />
      <SmallColumn w={17} cells={['cubePlain', 'X', 'cubeYellow']} />
      <SmallColumn w={14} cells={['cubeRedTop', 'Y', 'cubeRedBot']} />
      <Rule />
      <SmallColumn w={17} cells={['cubeMix', 'cubeTeal', 'cubeTealY']} />
      <Rule />
      <SmallColumn w={17} cells={[m('plot1'), m('plot2'), m('kGrey')]} />
    </RibbonGroup>
    <RibbonGroup name="Продавливание">
      <BigButton w={25} icon="punch" lines={['Расчет']} off />
      <SmallColumn w={17} cells={[m('asw'), 'ka', 'tGrey']} />
    </RibbonGroup>
    <RibbonGroup name="Армирование стержней">
      <BigButton w={24} icon="epure" lines={['Эпюры/', 'мозаика']} menu on />
      <BigButton w={32} icon="ibeam" lines={['Несимметрия']} menu on />
      <SmallColumn w={14} cells={['s1', 's2', 's3']} />
      <SmallColumn w={17} cells={['s4', m('s5'), 's6']} />
      <SmallColumn w={13} cells={['s1', 's7', 's1']} />
      <Rule />
      <SmallColumn w={16} cells={['pct', 'bars', 'hbars']} />
      <Rule />
      <SmallColumn w={20} cells={[m('beam'), 'glasses', m('kGrey')]} />
      <SmallColumn w={15} cells={['g1', 'v1', 'lc']} />
    </RibbonGroup>
    <RibbonGroup name="Инструменты">
      <BigButton w={26} icon="sapfir" lines={['Открыть', 'в САПФИР']} />
      <BigButton w={22} icon="ruler" lines={['Шкала']} menu />
      <SmallColumn w={17} cells={[{ icon: 'scaleCycle', on: true }, 'scaleCycle', m('vArrow')]} />
      <SmallColumn w={14} cells={[{ icon: 'scaleX', on: true }, 'graph2', 'hist']} />
      <SmallColumn w={13} cells={['filterE', 'eraser', 'redGrid']} />
      <SmallColumn w={13} cells={['palette', 'scales', 'leaf']} />
    </RibbonGroup>
    <RibbonGroup name="Таблицы">
      <BigButton w={26} icon="docs" lines={['Докумен-', 'тация']} menu />
    </RibbonGroup>
  </Ribbon>
);

/* ---------- work area ---------- */

const Main = styled.main`
  position: relative;
  display: flex;
  flex: 1;
  padding-right: 2px;
`;
const Rail = styled.aside`
  display: flex;
  flex-direction: column;
  width: 20px;
`;
const RailTools = styled.div`
  display: flex;
  flex: 0 1 380px;
  flex-direction: column;
  margin-top: 4px;
  padding: 0 1px;
  background: linear-gradient(90deg, #e9edf6, #dbe1ed);
  border-radius: 0 2px 0 0;
`;
const RailButton = styled.button<{ $on?: boolean }>`
  display: grid;
  flex: 18 1 0;
  min-height: 0;
  place-items: center;
  ${p => p.$on && hot}
`;
const RailRule = styled.span`
  flex: 3 1 0;
  margin: 1px 3px;
  border-bottom: 1px solid #c3c9d4;
`;
const RailGrip = styled.div`
  height: 8px;
  margin-right: 1px;
  padding-right: 2px;
  line-height: 7px;
  text-align: right;
  background: #aeb3bd;
  color: #eef0f4;
`;
const Pane = styled.section`
  display: flex;
  flex: 1 1 0;
  flex-direction: column;
  min-width: 0;
`;
const Splitter = styled.div`
  width: 4px;
  background: #dde2eb;
`;
const TabStrip = styled.div`
  display: flex;
  align-items: flex-end;
  justify-content: space-between;
  height: 12px;
  padding-right: 3px;
  background: linear-gradient(#ccd1dc, #e4e8f1);
  border-bottom: 1px solid #8f96a3;
`;
const DocTab = styled.button<{ $inset: number }>`
  display: flex;
  align-items: center;
  gap: 4px;
  height: 9px;
  margin-left: ${p => p.$inset}px;
  padding: 0 3px 0 7px;
  white-space: nowrap;
  background: #fff;
  color: #20262f;
  font-weight: 700;
  clip-path: polygon(9px 0, 100% 0, 100% 100%, 0 100%);
`;
const StripMenu = styled.button`
  display: grid;
  place-items: center;
  width: 5px;
  height: 11px;
`;
const Canvas = styled.div`
  display: grid;
  flex: 1;
  grid-template-columns: 1fr;
  align-items: start;
  background: #fff;
  border-left: 1px solid #8f9499;
  > * { grid-area: 1 / 1; }
`;
const Overlay = styled.div`
  padding-top: 12px;
  font: 11px/12px "Liberation Serif", serif;
  color: #111;
`;
const Variant = styled.p`
  padding-left: 1px;
  height: 11px;
  color: #0a8a14;
`;
const Heading = styled.h2`
  width: max-content;
  padding-left: 1px;
  font-size: 11px;
  line-height: 12px;
  background: #ff9494;
`;
const Legend = styled.ul`
  display: grid;
  gap: 3px;
  margin: 32px 0 0 4px;
  padding: 0;
  list-style: none;
`;
const LegendRow = styled.li`
  display: flex;
  align-items: center;
  gap: 5px;
  height: 49px;
`;
const Swatch = styled.span<{ $bg: string; $ink: string }>`
  width: 12px;
  height: 49px;
  writing-mode: vertical-rl;
  transform: rotate(180deg);
  text-align: center;
  line-height: 12px;
  background: ${p => p.$bg};
  color: ${p => p.$ink};
`;
const LegendValue = styled.span<{ $drop: number }>`
  padding-bottom: ${p => p.$drop}px;
`;
const Plot = styled.svg`
  width: 100%;
  height: auto;
`;

const palette = ['#800000', '#c82800', '#ff6400', '#ffa01e', '#ffdc3c', '#ffff78'];
const inks = ['#8fd0d8', '#6fc0cc', '#2a8ae0', '#2050a8', '#1c3c98', '#181c90'];

interface Model {
  origin: number;
  lines: number[][];
  bars: number[][];
  filled: boolean;
}

const leftModel: Model = {
  origin: 21,
  filled: true,
  lines: [[71, 198, 510], [95, 185, 469], [118, 172, 428], [142, 160, 387], [166, 147, 346], [190, 135, 304]],
  bars: [[355, 197, 510], [379, 185, 469], [403, 172, 428], [427, 159, 387], [450, 147, 346], [474, 134, 305]],
};
const rightModel: Model = {
  origin: 524,
  filled: false,
  lines: [[580, 192, 505], [604, 180, 464], [628, 167, 423], [652, 154, 382], [675, 142, 341], [699, 129, 300]],
  bars: [[866, 192, 505], [889, 180, 464], [913, 167, 423], [937, 154, 382], [960, 142, 341], [984, 129, 300]],
};

const fills = ['#800000', '#ff6400', '#ff6400', '#ffa01e', '#ffdc3c', '#ffff78'];

const Drawing = ({ model }: { model: Model }) => (
  <Plot viewBox={`${model.origin} 82 498 447`} role="img" aria-label="Схема стержней и пластин">
    {model.lines.map(([x, y1, y2], i) => (
      <rect key={x} x={x} y={y1} width="1.400" height={y2 - y1} fill={palette[i]} />
    ))}
    {model.bars.map(([x, top, bottom], i) => {
      const rows: number[] = [];
      for (let y = bottom - 17; y > top + 2; y -= 17) rows.push(y);
      return (
        <g key={x} fill="none" stroke={model.filled ? '#000' : '#4646a8'}>
          <rect x={x + 0.5} y={top + 0.5} width="17" height={bottom - top - 1} fill={model.filled ? fills[i] : '#fff'} strokeOpacity=".6" />
          <path
            strokeOpacity=".45"
            strokeWidth={model.filled ? 1 : 2}
            d={[3, 7, 10, 14].map(dx => `M${x + dx + (model.filled ? 0.5 : 0.8)} ${top + 1}V${bottom - 1}`).join('')}
          />
          <path
            strokeOpacity={model.filled ? 0.65 : 0.5}
            strokeWidth={model.filled ? 1 : 1.6}
            d={rows.map(y => `M${x + 1} ${y + 0.5}h16`).join('')}
          />
        </g>
      );
    })}
    <g transform={`translate(${model.origin + 14} 500)`} fontFamily="Liberation Sans, sans-serif" fontWeight="700" fontSize="7">
      <path d="M2.500 18V10M1 11l1.500-3 1.500 3" stroke="#f01818" fill="none" />
      <path d="M2.500 18h8M9 16.500l3 1.500-3 1.500" stroke="#108a20" fill="none" />
      <path d="M2.500 18l4-5" stroke="#1818f0" />
      <text x="0" y="7" fill="#f01818">Z</text>
      <text x="4" y="10" fill="#1818f0">Y</text>
      <text x="10" y="18" fill="#108a20">X</text>
    </g>
  </Plot>
);

interface DocProps { inset: number; axis: string; shares: string[]; values: string[]; drop: number; model: Model }
const Document = ({ inset, axis, shares, values, drop, model }: DocProps) => (
  <Pane>
    <TabStrip>
      <DocTab $inset={inset}>
        <LogoMark size={7} />Мозаика_расчетных длин.lir<span>×</span>
      </DocTab>
      <StripMenu aria-label="Список окон"><Caret $wide /></StripMenu>
    </TabStrip>
    <Canvas>
      <Drawing model={model} />
      <Overlay>
        <Variant>Вариант конструирования:Вариант 1</Variant>
        <Heading>Мозаика расчетных длин относительно {axis}<br />Единицы измерения - м</Heading>
        <Legend>
          {values.map((v, i) => (
            <LegendRow key={v}>
              <Swatch $bg={palette[i]} $ink={inks[i]}>{shares[i]}</Swatch>
              <LegendValue $drop={drop}>{v}</LegendValue>
            </LegendRow>
          ))}
        </Legend>
      </Overlay>
    </Canvas>
  </Pane>
);

const Popup = styled.div`
  position: absolute;
  left: 237px;
  top: 10px;
  display: grid;
  gap: 8px;
  padding: 3px 9px 1px 3px;
  border: 2px solid #e85a5a;
  background: #fafafa;
  box-shadow: 0 1px 3px #8888;
  font-family: "Noto Sans", "Open Sans", sans-serif;
  font-size: 7px;
  line-height: 10px;
  color: #26262e;
`;
const PopupItem = styled.button<{ $on?: boolean }>`
  display: flex;
  align-items: center;
  gap: 3px;
  white-space: nowrap;
  svg {
    border: 1px solid ${p => (p.$on ? '#f3b566' : 'transparent')};
    background: ${p => (p.$on ? '#ffe08c' : 'none')};
  }
`;

/* ---------- bottom bars ---------- */

const Dock = styled.div`
  display: flex;
  height: 20px;
  background: #cfd4de;
  border-bottom: 1px solid #a2a9b5;
`;
const ToolStrip = styled.div<{ $w: number }>`
  display: flex;
  flex: 0 1 ${p => p.$w}px;
  padding-left: 4px;
  background: linear-gradient(#eceff7, #d9deea);
`;
const ToolButton = styled.button<{ $on?: boolean }>`
  display: grid;
  flex: 18 1 0;
  min-width: 0;
  place-items: center;
  margin: 1px 0;
  ${p => p.$on && hot}
`;
const ToolMenu = styled.button`
  display: grid;
  flex: 8 1 0;
  place-items: center;
`;
const ToolRule = styled.span`
  flex: 3 1 0;
  margin: 4px 0;
  border-left: 1px solid #c3c9d4;
`;
const Cap = styled.button`
  display: grid;
  flex: 0 0 7px;
  align-items: end;
  justify-items: center;
  padding-bottom: 3px;
  background: #aab0bb;
  border-radius: 0 2px 2px 0;
`;

const Strip = ({ w, tools }: { w: number; tools: string }) => (
  <ToolStrip $w={w} role="toolbar">
    {tools.split(' ').map((t, i) => {
      if (t === 'v') return <ToolMenu key={i} aria-label="Ещё"><Caret $wide /></ToolMenu>;
      if (t === '|') return <ToolRule key={i} />;
      const name = t.replace('*', '');
      return <ToolButton key={i} $on={t.endsWith('*')} aria-label={name}><Icon name={name} size={12} /></ToolButton>;
    })}
    <Cap aria-label="Настройка панели"><Caret $color="#fff" $wide /></Cap>
  </ToolStrip>
);

const StatusBar = styled.footer`
  display: flex;
  align-items: center;
  justify-content: flex-end;
  height: 9px;
  background: linear-gradient(#dfe3ea 0 11%, #a4abb5 22%, #b6bcc6);
  color: #252b35;
`;
const VariantPick = styled.label`
  display: flex;
  align-items: center;
  gap: 1px;
  width: 98px;
  padding-left: 3px;
  background: #c6cbd4;
`;
const VariantSelect = styled.select`
  flex: 1;
  height: 7px;
  appearance: none;
  padding-left: 1px;
  background: #f0f2f5;
`;
const StatusText = styled.span`
  width: 54px;
  padding-left: 2px;
  border-left: 1px solid #8c939e;
  white-space: nowrap;
  &:last-child { width: 32px; }
`;

const railTools = ('gear gearPen numX cells curves turn* turn1 | efTag cubeTag beamTag brickTag | ' +
  'beam3 stairs slab slabY para paraGrid* | shapes sumTurn axTurn boxTurn').split(' ');

const quick: [string, boolean][] = [
  ['doc', true], ['open', false], ['save', false], ['undo', true], ['redo', true], ['block', false], ['nodes', false],
  ['camera', false], ['bolt', true], ['chart', false], ['lock', false], ['blocks3', false], ['find', false], ['aa', true],
];

const menus: [string, number][] = [
  ['Создание и редактирование', 75], ['Расширенное редактирование', 80], ['Расчет', 26], ['Анализ', 26],
  ['Расширенный анализ', 61], ['Железобетон', 38], ['Металл', 30], ['Кирпич', 26],
];

export default function App() {
  return (
    <Page>
      <Global />
      <TitleBar>
        <AppButton aria-label="Меню приложения"><LogoMark size={15} /></AppButton>
        <QuickTools>
          {quick.map(([name, menu]) => (
            <QuickButton key={name} $menu={menu} aria-label={name}>
              <Icon name={name} size={9} />{menu && <Caret $color="#d3dae2" />}
            </QuickButton>
          ))}
        </QuickTools>
        <AppTitle>ЛИРА-САПФИР 2025 R2 x64 - Мозаика_расчетных длин.lir</AppTitle>
        <WindowControls>
          <WindowButton $lit aria-label="Свернуть"><svg width="5" height="5"><path d="M0 2.500h5" stroke="#fff" /></svg></WindowButton>
          <WindowButton aria-label="Восстановить"><svg width="5" height="5"><path d="M.5 1.500h3v3h-3zM1.500 .5h3v3" stroke="#fff" fill="none" /></svg></WindowButton>
          <WindowButton aria-label="Закрыть"><svg width="5" height="5"><path d="M.5 .5l4 4M4.500 .5l-4 4" stroke="#fff" /></svg></WindowButton>
        </WindowControls>
      </TitleBar>
      <MenuBar>
        {menus.map(([name, w]) => <MenuTab key={name} $w={w} $active={name === 'Железобетон'}>{name}</MenuTab>)}
        <MenuRight>
          <MenuLink>Стиль<Caret /></MenuLink>
          <MenuLink>Окно<Caret /></MenuLink>
          <MenuLink aria-label="Справка"><svg width="5" height="7" viewBox="0 0 5 7"><path d="M1 2c0-2 3-2 3 0 0 1-1.500 1-1.500 3M2 6h1.500" stroke="#2c3e66" strokeWidth="1.400" fill="none" /></svg></MenuLink>
        </MenuRight>
      </MenuBar>
      <RibbonBar />
      <Main>
        <Rail>
          <RailTools role="toolbar">
            {railTools.map((t, i) => t === '|'
              ? <RailRule key={i} />
              : <RailButton key={i} $on={t.endsWith('*')} aria-label={t.replace('*', '')}><Icon name={t.replace('*', '')} size={12} /></RailButton>)}
          </RailTools>
          <RailGrip>|▸</RailGrip>
        </Rail>
        <Document inset={4} axis="Y1" drop={14} model={leftModel}
          shares={['22%', '<1%', '37%', '16%', '14%', '12%']} values={['5.5', '5', '4.5', '4', '3.5', '3']} />
        <Splitter />
        <Document inset={1} axis="Z1" drop={8} model={rightModel}
          shares={['17%', '17%', '17%', '17%', '17%', '17%']} values={['2.75', '2.5', '2.25', '2', '1.75', '1.5']} />
        <Popup role="menu">
          <PopupItem $on role="menuitem"><LengthIcon axis="y" size={31} />Расчетные длины относительно Y1</PopupItem>
          <PopupItem role="menuitem"><LengthIcon axis="z" size={31} />Расчетные длины относительно Z1</PopupItem>
        </Popup>
      </Main>
      <Dock>
        <Strip w={568} tools="star dPlus v gridSel dH v dV* dEq dAx dGrid v dEf v dDiag v steps funnel boxArc magnet brush | box1 boxAx boxWin box1 boxTurn2 frame1 frame2 | loupe loupeX | torch dim v pencil gearPen" />
        <Strip w={215} tools="isoAx* rotAx xz v xy v yz v yx v planes rotate v axRed" />
        <Strip w={172} tools="cubeA cubeB cubeC cubeD cubeE cubeF cubeG cubeH cubeI" />
      </Dock>
      <StatusBar>
        <VariantPick>
          <Icon name="pencil" size={7} />
          <VariantSelect aria-label="Вариант"><option>1. Вариант 1</option></VariantSelect>
          <Caret />
        </VariantPick>
        <StatusText>Уз.: 0 / 733</StatusText>
        <StatusText>Эл.: 0 / 569</StatusText>
        <StatusText>Загр.: 1 / 1</StatusText>
      </StatusBar>
    </Page>
  );
}
